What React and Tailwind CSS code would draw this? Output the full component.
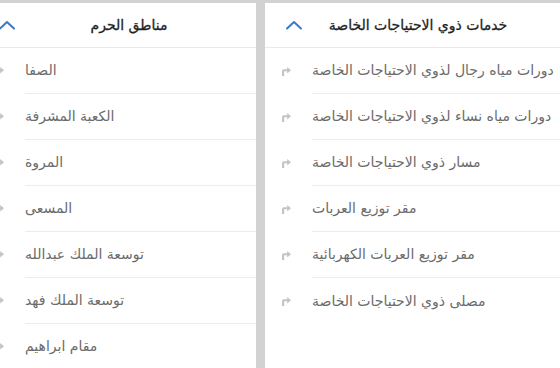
const services = [
  'دورات مياه رجال لذوي الاحتياجات الخاصة',
  'دورات مياه نساء لذوي الاحتياجات الخاصة',
  'مسار ذوي الاحتياجات الخاصة',
  'مقر توزيع العربات',
  'مقر توزيع العربات الكهربائية',
  'مصلى ذوي الاحتياجات الخاصة'
];

const areas = [
  'الصفا',
  'الكعبة المشرفة',
  'المروة',
  'المسعى',
  'توسعة الملك عبدالله',
  'توسعة الملك فهد',
  'مقام ابراهيم'
];

const ChevronUp = () => (
  <svg width="18" height="10" viewBox="0 0 18 10" fill="none" className="shrink-0">
    <path d="M2 8.5 9 2l7 6.5" stroke="#3b78c8" strokeWidth="2" strokeLinecap="round" strokeLinejoin="round" />
  </svg>
);

const ForwardIcon = () => (
  <svg width="10" height="9" viewBox="0 0 10 9">
    <path d="M1 9V4.2C1 3 1.8 2.2 3 2.2h3.2V0L10 3.2 6.2 6.4V4.2H3.2v4.8z" fill="#c4c4c4" />
  </svg>
);

function Panel({ title, items, width, titlePad, lastLine }) {
  return (
    <section className={`shrink-0 bg-white ${width}`}>
      <header className="flex h-[45px] items-center border-b border-[#e9e9e9] pl-[20px]">
        <ChevronUp />
        <h3
          className={`min-w-0 flex-1 whitespace-nowrap text-center text-[14px] font-normal text-[#1f1f1f] [-webkit-text-stroke:0.3px_#1f1f1f] ${titlePad}`}
          dir="rtl"
        >
          {title}
        </h3>
      </header>
      <ul>
        {items.map((item, i) => (
          <li key={item} className="flex h-[46px] items-stretch">
            <div className="flex w-[47px] shrink-0 items-center pl-[16px]">
              <ForwardIcon />
            </div>
            <div
              className={`flex flex-1 items-center ${
                i < items.length - 1 || lastLine ? 'border-b border-[#ececec]' : ''
              }`}
            >
              <span className="text-[14px] text-[#6b6b6b]" dir="rtl">{item}</span>
            </div>
          </li>
        ))}
      </ul>
    </section>
  );
}

export default function App() {
  return (
    <div
      className="h-[368px] w-[560px] overflow-hidden bg-[#d2d2d2] pt-[3px]"
      style={{ fontFamily: '"DejaVu Sans", "Noto Sans", sans-serif' }}
    >
      <div className="-ml-[22px] flex h-full gap-[9px]">
        <Panel title="مناطق الحرم" items={areas} width="w-[278px]" titlePad="pr-[14px]" lastLine />
        <Panel title="خدمات ذوي الاحتياجات الخاصة" items={services} width="w-[306px]" titlePad="pr-[38px]" />
      </div>
    </div>
  );
}
